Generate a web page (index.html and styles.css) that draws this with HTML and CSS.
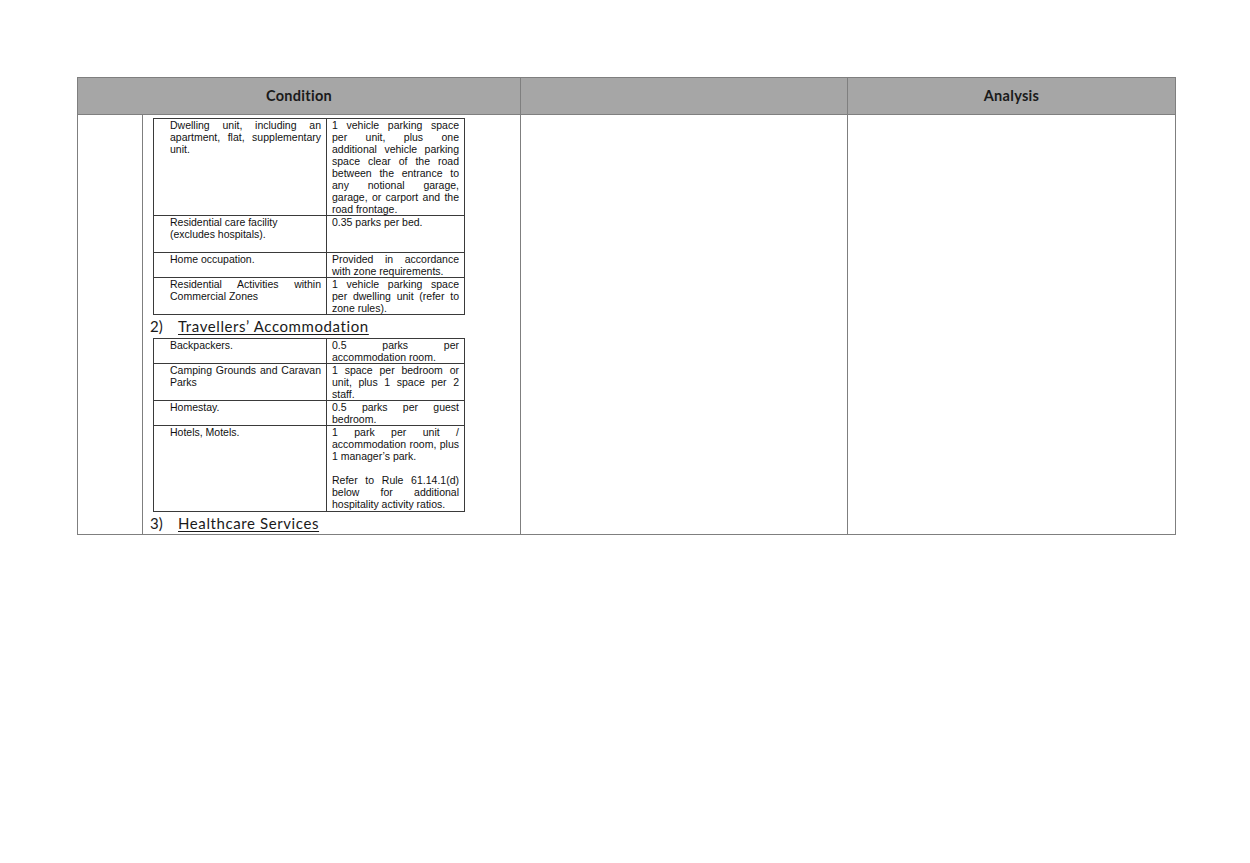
FILE: index.html
```html
<!DOCTYPE html>
<html>
<head>
<meta charset="utf-8">
<link rel="stylesheet" href="styles.css">
</head>
<body>
<table class="outer">
  <colgroup>
    <col class="c1"><col class="c2"><col class="c3">
  </colgroup>
  <thead>
    <tr>
      <th>Condition</th>
      <th></th>
      <th>Analysis</th>
    </tr>
  </thead>
  <tbody>
    <tr>
      <td class="cond">
        <div class="cond-wrap">
          <div class="spacer"></div>
          <div class="content">
            <table class="inner">
              <colgroup><col class="ca"><col class="cb"></colgroup>
              <tr class="r1">
                <td class="a">Dwelling unit, including an apartment, flat, supplementary unit.</td>
                <td class="b">1 vehicle parking space per unit, plus one additional vehicle parking space clear of the road between the entrance to any notional garage, garage, or carport and the road frontage.</td>
              </tr>
              <tr class="r2">
                <td class="a nj">Residential care facility<br>(excludes hospitals).</td>
                <td class="b">0.35 parks per bed.</td>
              </tr>
              <tr class="r3">
                <td class="a">Home occupation.</td>
                <td class="b">Provided in accordance with zone requirements.</td>
              </tr>
              <tr class="r4">
                <td class="a">Residential Activities within Commercial Zones</td>
                <td class="b">1 vehicle parking space per dwelling unit (refer to zone rules).</td>
              </tr>
            </table>
            <div class="heading"><span class="num">2)</span><span class="ttl">Travellers’ Accommodation</span></div>
            <table class="inner">
              <colgroup><col class="ca"><col class="cb"></colgroup>
              <tr class="s1">
                <td class="a">Backpackers.</td>
                <td class="b">0.5 parks per accommodation room.</td>
              </tr>
              <tr class="s2">
                <td class="a">Camping Grounds and Caravan Parks</td>
                <td class="b">1 space per bedroom or unit, plus 1 space per 2 staff.</td>
              </tr>
              <tr class="s3">
                <td class="a">Homestay.</td>
                <td class="b">0.5 parks per guest bedroom.</td>
              </tr>
              <tr class="s4">
                <td class="a">Hotels, Motels.</td>
                <td class="b">1 park per unit / accommodation room, plus 1 manager’s park.<br><br>Refer to Rule 61.14.1(d) below for additional hospitality activity ratios.</td>
              </tr>
            </table>
            <div class="heading h3"><span class="num">3)</span><span class="ttl">Healthcare Services</span></div>
          </div>
        </div>
      </td>
      <td></td>
      <td></td>
    </tr>
  </tbody>
</table>
</body>
</html>
```

FILE: styles.css
```css
html, body {
  margin: 0;
  padding: 0;
  background: #ffffff;
}
body {
  padding: 77px 0 0 77px;
}
.outer {
  border-collapse: collapse;
  width: 1098px;
  table-layout: fixed;
  border: 1px solid #8a8a8a;
}
.outer .c1 { width: 443px; }
.outer .c2 { width: 327px; }
.outer .c3 { width: 328px; }
.outer th {
  background: #a6a6a6;
  height: 34px;
  padding: 0 0 2px 0;
  border: 1px solid #7f7f7f;
  font-family: "Lato", "DejaVu Sans", sans-serif;
  font-weight: 700;
  font-size: 14.5px;
  letter-spacing: 0.3px;
  color: #1a1a1a;
  text-align: center;
  vertical-align: middle;
}
.outer td {
  border: 1px solid #7f7f7f;
  padding: 0;
  vertical-align: top;
}
.outer tbody td {
  border-top: 1px solid #6f6f6f;
}
.cond-wrap {
  display: flex;
}
.spacer {
  width: 64px;
  border-right: 1px solid #7f7f7f;
  flex: none;
}
.content {
  padding: 3px 0 0 10px;
}
.inner {
  border-collapse: collapse;
  table-layout: fixed;
  width: 311px;
  border: 1px solid #3a3a3a;
  font-family: "Liberation Sans", Arial, sans-serif;
  font-size: 10.5px;
  line-height: 12px;
  color: #111;
}
.inner .ca { width: 173px; }
.inner .cb { width: 138px; }
.outer .inner td {
  border: 1px solid #3a3a3a;
  text-align: justify;
  vertical-align: top;
}
.outer .inner td.a {
  padding: 0 5px 0 16px;
}
.outer .inner td.b {
  padding: 0 5px 0 5px;
}
.outer .inner td.nj { text-align: left; }
.r1 td { height: 96px; }
.r2 td { height: 36px; }
.r3 td { height: 24px; }
.r4 td { height: 36px; }
.s1 td { height: 24px; }
.s2 td { height: 36px; }
.s3 td { height: 24px; }
.s4 td { height: 85px; }
.heading {
  font-family: "Lato", "DejaVu Sans", sans-serif;
  font-size: 15px;
  letter-spacing: 0.6px;
  color: #1a1a1a;
  height: 23px;
  line-height: 22px;
  display: flex;
  margin-left: -3px;
}
.heading .num {
  width: 28px;
  flex: none;
  letter-spacing: 0;
}
.heading .ttl {
  text-decoration: underline;
  text-underline-offset: 2px;
  text-decoration-thickness: 1px;
}
.h3 {
  height: 22px;
}
```
